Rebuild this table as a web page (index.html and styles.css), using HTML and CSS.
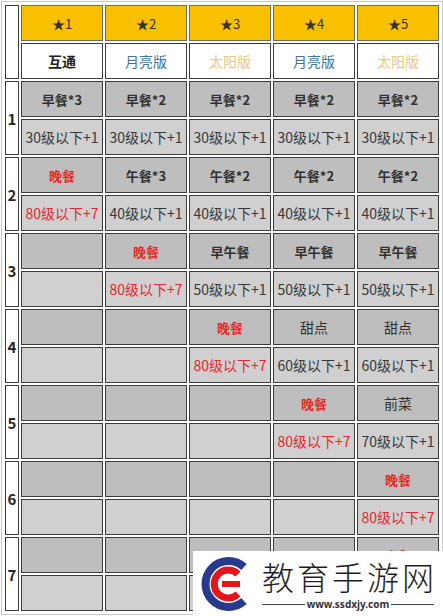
FILE: index.html
```html
<!DOCTYPE html>
<html lang="zh">
<head>
<meta charset="utf-8">
<title>料理表</title>
<link rel="stylesheet" href="styles.css">
</head>
<body>
<table class="grid">
  <tr>
    <td class="num" rowspan="2"></td>
    <td class="star">★1</td><td class="star">★2</td><td class="star">★3</td><td class="star">★4</td><td class="star">★5</td>
  </tr>
  <tr>
    <td class="ver both">互通</td><td class="ver moon">月亮版</td><td class="ver sun">太阳版</td><td class="ver moon">月亮版</td><td class="ver sun">太阳版</td>
  </tr>

  <tr>
    <td class="num" rowspan="2">1</td>
    <td class="meal">早餐*3</td><td class="meal">早餐*2</td><td class="meal">早餐*2</td><td class="meal">早餐*2</td><td class="meal">早餐*2</td>
  </tr>
  <tr>
    <td class="lv">30级以下+1</td><td class="lv">30级以下+1</td><td class="lv">30级以下+1</td><td class="lv">30级以下+1</td><td class="lv">30级以下+1</td>
  </tr>

  <tr>
    <td class="num" rowspan="2">2</td>
    <td class="meal red">晚餐</td><td class="meal">午餐*3</td><td class="meal">午餐*2</td><td class="meal">午餐*2</td><td class="meal">午餐*2</td>
  </tr>
  <tr>
    <td class="lv red">80级以下+7</td><td class="lv">40级以下+1</td><td class="lv">40级以下+1</td><td class="lv">40级以下+1</td><td class="lv">40级以下+1</td>
  </tr>

  <tr>
    <td class="num" rowspan="2">3</td>
    <td class="meal"></td><td class="meal red">晚餐</td><td class="meal">早午餐</td><td class="meal">早午餐</td><td class="meal">早午餐</td>
  </tr>
  <tr>
    <td class="lv"></td><td class="lv red">80级以下+7</td><td class="lv">50级以下+1</td><td class="lv">50级以下+1</td><td class="lv">50级以下+1</td>
  </tr>

  <tr>
    <td class="num" rowspan="2">4</td>
    <td class="meal"></td><td class="meal"></td><td class="meal red">晚餐</td><td class="meal light">甜点</td><td class="meal light">甜点</td>
  </tr>
  <tr>
    <td class="lv"></td><td class="lv"></td><td class="lv red">80级以下+7</td><td class="lv">60级以下+1</td><td class="lv">60级以下+1</td>
  </tr>

  <tr>
    <td class="num" rowspan="2">5</td>
    <td class="meal"></td><td class="meal"></td><td class="meal"></td><td class="meal red">晚餐</td><td class="meal light">前菜</td>
  </tr>
  <tr>
    <td class="lv"></td><td class="lv"></td><td class="lv"></td><td class="lv red">80级以下+7</td><td class="lv">70级以下+1</td>
  </tr>

  <tr>
    <td class="num" rowspan="2">6</td>
    <td class="meal"></td><td class="meal"></td><td class="meal"></td><td class="meal"></td><td class="meal red">晚餐</td>
  </tr>
  <tr>
    <td class="lv"></td><td class="lv"></td><td class="lv"></td><td class="lv"></td><td class="lv red">80级以下+7</td>
  </tr>

  <tr>
    <td class="num" rowspan="2">7</td>
    <td class="meal"></td><td class="meal"></td><td class="meal"></td><td class="meal"></td><td class="meal red">大餐</td>
  </tr>
  <tr>
    <td class="lv"></td><td class="lv"></td><td class="lv"></td><td class="lv"></td><td class="lv"></td>
  </tr>
</table>

<div class="watermark">
  <svg class="logo" width="56" height="58" viewBox="0 0 56 58">
    <path d="M46 12 A23 23 0 1 0 46 46" fill="none" stroke="#283a8e" stroke-width="8"/>
    <path d="M40 19 A14 14 0 1 0 40 39" fill="none" stroke="#e3151d" stroke-width="7"/>
    <rect x="24" y="26" width="18" height="6" fill="#e3151d"/>
  </svg>
  <div class="brand">
    <div class="brand-name">教育手游网</div>
    <div class="brand-url"><span class="rule"></span><span class="url">www.ssdxjy.com</span><span class="rule"></span></div>
  </div>
</div>
</body>
</html>
```

FILE: styles.css
```css
html, body {
  margin: 0;
  padding: 0;
  background: #ffffff;
}

body {
  font-family: "Noto Sans CJK SC", "Noto Sans", sans-serif;
  position: relative;
  width: 443px;
  height: 616px;
  overflow: hidden;
}

.grid {
  margin: 1px 0 0 1px;
  border: 1px solid #c9c9c9;
  padding: 1px;
  border-collapse: separate;
  border-spacing: 2px;
}

.grid td {
  border: 1px solid #3c3c3c;
  padding: 0;
  width: 80px;
  height: 34px;
  text-align: center;
  vertical-align: middle;
  white-space: nowrap;
  color: #333333;
  line-height: 1;
}

.grid td.num {
  width: 12px;
  background: #ffffff;
  font-size: 15px;
  font-weight: bold;
  color: #262626;
  text-align: center;
}

.grid td.star {
  background: #f9c000;
  font-size: 13px;
  color: #3a3326;
  border-color: #6d6a5e;
}

.grid td.ver {
  background: #ffffff;
  font-size: 14px;
}

.grid td.both {
  font-weight: bold;
  color: #222222;
}

.grid td.moon {
  color: #3f7398;
}

.grid td.sun {
  color: #e9c97e;
}

.grid td.meal {
  background: #bebebe;
  font-size: 13px;
  font-weight: bold;
  color: #303030;
}

.grid td.meal.light {
  font-weight: normal;
  font-size: 14px;
}

.grid td.lv {
  background: #d0d0d0;
  font-size: 14px;
  color: #383838;
}

.grid td.red {
  color: #e32a2a;
}

.watermark {
  position: absolute;
  left: 193px;
  top: 551px;
  right: 0;
  bottom: 0;
  background: #ffffff;
  display: flex;
  align-items: flex-start;
  padding: 4px 0 0 5px;
}

.logo {
  flex: none;
  display: block;
}

.brand {
  margin-left: 8px;
  width: 172px;
  display: flex;
  flex-direction: column;
}

.brand-name {
  font-size: 32px;
  font-weight: 300;
  letter-spacing: 3px;
  line-height: 42px;
  color: #1e1e1e;
  white-space: nowrap;
}

.brand-url {
  display: flex;
  align-items: center;
  gap: 2px;
  margin-top: 1px;
}

.rule {
  flex: 1;
  height: 1px;
  background: #444444;
}

.url {
  font-family: "Noto Sans", sans-serif;
  font-size: 10px;
  font-weight: bold;
  color: #333333;
  line-height: 12px;
}
```
